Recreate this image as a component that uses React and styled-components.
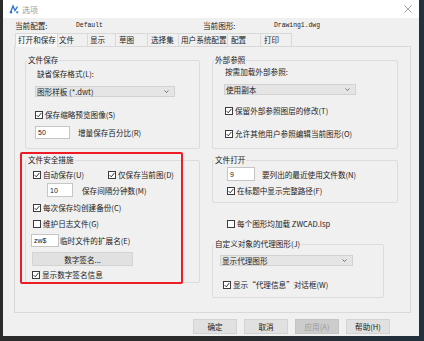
import React from 'react';
import styled, { createGlobalStyle } from 'styled-components';

const GlobalStyle = createGlobalStyle`
  html, body { margin: 0; padding: 0; background: #262a30; }
  body { font-family: "Noto Sans CJK SC", "Noto Sans", sans-serif; }
  * { box-sizing: border-box; }
`;

const Screen = styled.div`
  width: 424px;
  height: 341px;
  overflow: hidden;
  padding-left: 3px;
  background: linear-gradient(90deg, #2b2b2b 0%, #2b2b2b 45%, #22303d 100%);
`;

const Window = styled.div`
  position: relative;
  width: 416px;
  height: 336px;
  background: #f0f0f0;
  display: flex;
  flex-direction: column;
  font-size: 7.6px;
  line-height: 9px;
  color: #222;
`;

const TitleBar = styled.div`
  height: 18px;
  flex: none;
  background: #fff;
  display: flex;
  align-items: center;
  padding: 0 7px 0 6px;
  gap: 3px;
  color: #9a9a9a;
  font-size: 8px;
  .spacer { flex: 1; }
`;

const InfoRow = styled.div`
  height: 15px;
  flex: none;
  display: grid;
  grid-template-columns: 61px 127px 71px auto;
  align-items: center;
  padding-left: 12px;
  white-space: nowrap;
`;

const Mono = styled.span`
  font-family: "Liberation Mono", "DejaVu Sans Mono", monospace;
  font-size: 6.4px;
`;

const TabStrip = styled.div`
  height: 13px;
  flex: none;
  display: flex;
  padding-left: 12px;
  align-items: flex-end;
`;

const Tab = styled.div`
  position: relative;
  width: ${p => p.$w}px;
  height: ${p => (p.$active ? 14 : 13)}px;
  margin-right: -1px;
  margin-bottom: ${p => (p.$active ? -1 : 0)}px;
  z-index: ${p => (p.$active ? 1 : 0)};
  padding-left: ${p => p.$pad ?? 2}px;
  border: 1px solid #d9d9d9;
  border-bottom: none;
  background: ${p => (p.$active ? '#f7f7f7' : '#f0f0f0')};
  line-height: 11px;
  white-space: nowrap;
`;

const Panel = styled.div`
  flex: none;
  margin-left: 11px;
  width: 397px;
  height: 267px;
  border: 1px solid #d9d9d9;
  background: #f0f0f0;
  padding: 9px 0 0 10px;
  display: grid;
  grid-template-columns: 175px 186px;
  column-gap: 12px;
  align-items: start;
`;

const Column = styled.div`
  display: flex;
  flex-direction: column;
  align-items: flex-start;
`;

const Group = styled.fieldset`
  margin: ${p => p.$mt ?? 0}px 0 0 0;
  padding: 0;
  min-width: 0;
  width: ${p => p.$w}px;
  border: 1px solid #dcdcdc;
  border-radius: 2px;
`;

const Legend = styled.legend`
  margin-left: 1px;
  padding: 0 1px;
  font-size: 7.6px;
  line-height: 8px;
  height: 8px;
  white-space: nowrap;
`;

const Content = styled.div`
  display: flex;
  flex-direction: column;
  align-items: flex-start;
  padding: 0 0 ${p => p.$pb}px ${p => p.$pl}px;
`;

const Caption = styled.div`
  height: 9px;
  margin-top: ${p => p.$mt ?? 0}px;
  margin-left: ${p => p.$ml ?? 0}px;
  white-space: nowrap;
`;

const Line = styled.div`
  display: flex;
  align-items: center;
  gap: ${p => p.$gap ?? 0}px;
  margin-top: ${p => p.$mt ?? 0}px;
  margin-left: ${p => p.$ml ?? 0}px;
  white-space: nowrap;
`;

const CheckRow = styled.label`
  display: flex;
  align-items: center;
  gap: 2px;
  height: 9px;
  width: ${p => (p.$w ? `${p.$w}px` : 'auto')};
  margin-top: ${p => p.$mt ?? 0}px;
  margin-left: ${p => p.$ml ?? 0}px;
  white-space: nowrap;
`;

const Box = styled.span`
  flex: none;
  width: 8px;
  height: 8px;
  border: 1px solid #3c3c3c;
  background: #fff;
  display: flex;
  align-items: center;
  justify-content: center;
`;

const Input = styled.div`
  width: ${p => p.$w}px;
  height: ${p => p.$h}px;
  background: #fff;
  border: 1px solid #c6c6c6;
  padding-left: 2px;
  display: flex;
  align-items: center;
  font-family: "Liberation Sans", Arial, sans-serif;
  font-size: 7px;
`;

const Select = styled.div`
  width: ${p => p.$w}px;
  height: 11px;
  margin-top: ${p => p.$mt ?? 0}px;
  background: #e5e5e5;
  border: 1px solid #d2d2d2;
  padding: 0 5px 0 1px;
  display: flex;
  align-items: center;
  justify-content: space-between;
  white-space: nowrap;
`;

const Button = styled.div`
  width: ${p => p.$w}px;
  height: ${p => p.$h}px;
  margin-top: ${p => p.$mt ?? 0}px;
  margin-left: ${p => p.$ml ?? 0}px;
  background: ${p => (p.$disabled ? '#cccccc' : '#e1e1e1')};
  color: ${p => (p.$disabled ? '#9a9a9a' : '#222')};
  border: 1px solid ${p => (p.$disabled ? '#c4c4c4' : '#d3d3d3')};
  display: flex;
  align-items: center;
  justify-content: center;
  white-space: nowrap;
`;

const ButtonRow = styled.div`
  flex: none;
  display: flex;
  justify-content: flex-end;
  gap: 7px;
  margin-top: 6px;
  padding-right: 29px;
`;

const Annotation = styled.div`
  position: absolute;
  left: 17px;
  top: 152px;
  width: 163px;
  height: 132px;
  border: 2px solid #ee1c24;
  border-radius: 2px;
  pointer-events: none;
`;

function Chevron() {
  return (
    <svg width="5" height="3" viewBox="0 0 5 3">
      <path d="M0.5 0.5 L2.5 2.5 L4.5 0.5" fill="none" stroke="#555" strokeWidth="0.8" />
    </svg>
  );
}

function Check({ checked = true, children, ...rest }) {
  return (
    <CheckRow {...rest}>
      <Box>
        {checked && (
          <svg width="6" height="6" viewBox="0 0 6 6">
            <path d="M0.6 3.1 L2.3 4.8 L5.4 0.9" fill="none" stroke="#222" strokeWidth="0.9" />
          </svg>
        )}
      </Box>
      <span>{children}</span>
    </CheckRow>
  );
}

const tabs = [
  { label: '打开和保存', w: 43, active: true },
  { label: '文件', w: 31, pad: 1 },
  { label: '显示', w: 29 },
  { label: '草图', w: 33, pad: 3 },
  { label: '选择集', w: 32, pad: 3 },
  { label: '用户系统配置', w: 50, pad: 2 },
  { label: '配置', w: 34, pad: 3 },
  { label: '打印', w: 32, pad: 3 },
];

export default function App() {
  return (
    <>
      <GlobalStyle />
      <Screen>
        <Window>
          <TitleBar>
            <svg width="10" height="10" viewBox="0 0 10 10">
              <path d="M1.5 8.5 L4 2 L6 6.5 L8.5 2.5" fill="none" stroke="#2f6fd6" strokeWidth="1.3" />
              <circle cx="2" cy="8.3" r="1.2" fill="#2f6fd6" />
              <circle cx="8.2" cy="8.3" r="1.2" fill="#5a93e8" />
            </svg>
            <span>选项</span>
            <span className="spacer" />
            <svg width="8" height="8" viewBox="0 0 8 8">
              <path d="M0.5 0.5 L7.5 7.5 M7.5 0.5 L0.5 7.5" stroke="#8a8a8a" strokeWidth="0.8" />
            </svg>
          </TitleBar>

          <InfoRow>
            <span>当前配置:</span>
            <Mono>Default</Mono>
            <span>当前图形:</span>
            <Mono>Drawing1.dwg</Mono>
          </InfoRow>

          <TabStrip>
            {tabs.map(t => (
              <Tab key={t.label} $w={t.w} $pad={t.pad} $active={t.active}>
                {t.label}
              </Tab>
            ))}
          </TabStrip>

          <Panel>
            <Column>
              <Group $w={175}>
                <Legend>文件保存</Legend>
                <Content $pl={9} $pb={9}>
                  <Caption $mt={5} $ml={2}>缺省保存格式(L):</Caption>
                  <Select $w={140} $mt={8}>
                    <span>图形样板 (*.dwt)</span>
                    <Chevron />
                  </Select>
                  <Check $mt={13}>保存缩略预览图像(S)</Check>
                  <Line $mt={7} $gap={8}>
                    <Input $w={35} $h={13}>50</Input>
                    <span>增量保存百分比(R)</span>
                  </Line>
                </Content>
              </Group>

              <Group $w={175} $mt={7}>
                <Legend>文件安全措施</Legend>
                <Content $pl={7} $pb={3}>
                  <Line $mt={6}>
                    <Check $w={75}>自动保存(U)</Check>
                    <Check>仅保存当前图(D)</Check>
                  </Line>
                  <Line $mt={4} $ml={14} $gap={9}>
                    <Input $w={26} $h={14}>10</Input>
                    <span>保存间隔分钟数(M)</span>
                  </Line>
                  <Check $mt={6}>每次保存均创建备份(C)</Check>
                  <Check $mt={7} checked={false}>维护日志文件(G)</Check>
                  <Line $mt={6} $ml={-2} $gap={1}>
                    <Input $w={28} $h={13}>zw$</Input>
                    <span>临时文件的扩展名(E)</span>
                  </Line>
                  <Button $w={101} $h={14} $mt={5} $ml={-1}>数字签名...</Button>
                  <Check $mt={4} $ml={-1}>显示数字签名信息</Check>
                </Content>
              </Group>
            </Column>

            <Column>
              <Group $w={186}>
                <Legend>外部参照</Legend>
                <Content $pl={11} $pb={10}>
                  <Caption $mt={3} $ml={1}>按需加载外部参照:</Caption>
                  <Select $w={132} $mt={8}>
                    <span>使用副本</span>
                    <Chevron />
                  </Select>
                  <Check $mt={11} $ml={1}>保留外部参照图层的修改(T)</Check>
                  <Check $mt={14} $ml={1}>允许其他用户参照编辑当前图形(O)</Check>
                </Content>
              </Group>

              <Group $w={186} $mt={7}>
                <Legend>文件打开</Legend>
                <Content $pl={14} $pb={7}>
                  <Line $mt={3} $gap={7}>
                    <Input $w={28} $h={14}>9</Input>
                    <span>要列出的最近使用文件数(N)</span>
                  </Line>
                  <Check $mt={5}>在标题中显示完整路径(F)</Check>
                </Content>
              </Group>

              <Check $mt={16} $ml={15} checked={false}>每个图形均加载 ZWCAD.lsp</Check>

              <Group $w={172} $mt={12}>
                <Legend>自定义对象的代理图形(J)</Legend>
                <Content $pl={7} $pb={8}>
                  <Select $w={133} $mt={7}>
                    <span>显示代理图形</span>
                    <Chevron />
                  </Select>
                  <Check $mt={14} $ml={3}>显示“代理信息”对话框(W)</Check>
                </Content>
              </Group>
            </Column>
          </Panel>

          <ButtonRow>
            <Button $w={44} $h={15}>确定</Button>
            <Button $w={44} $h={15}>取消</Button>
            <Button $w={44} $h={15} $disabled>应用(A)</Button>
            <Button $w={44} $h={15}>帮助(H)</Button>
          </ButtonRow>

          <Annotation />
        </Window>
      </Screen>
    </>
  );
}
